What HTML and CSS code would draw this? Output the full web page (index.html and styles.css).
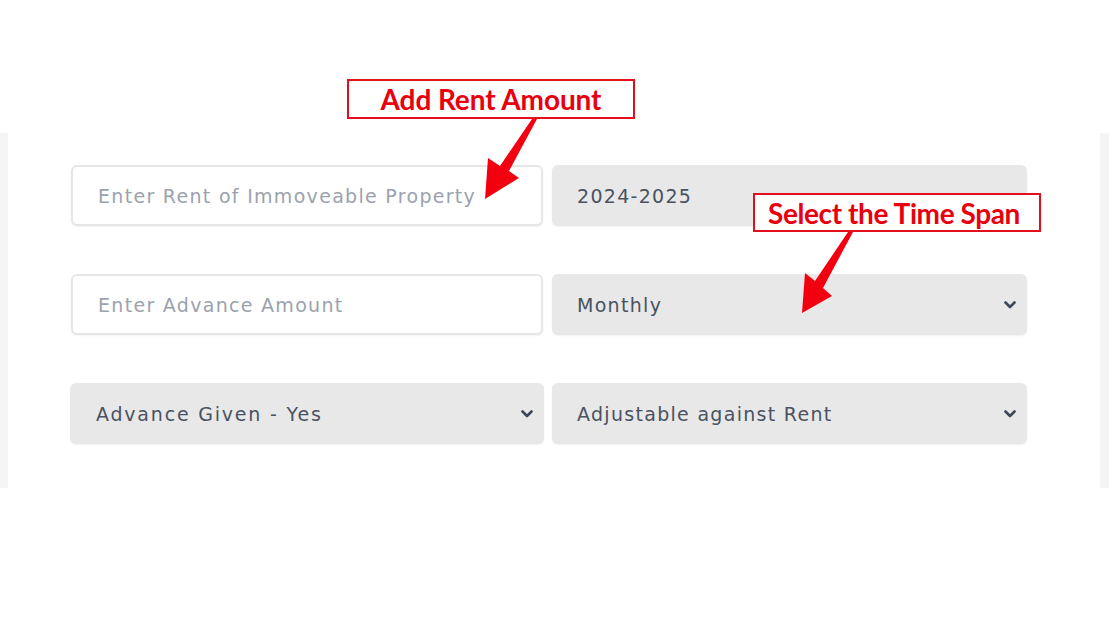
FILE: index.html
```html
<!DOCTYPE html>
<html lang="en">
<head>
<meta charset="utf-8">
<title>Rent Form</title>
<link rel="stylesheet" href="styles.css">
</head>
<body>
<div class="page">
  <div class="band">
    <div class="card">
      <div class="form-grid">
        <input class="field input" type="text" placeholder="Enter Rent of Immoveable Property">
        <div class="field select plain"><span>2024-2025</span></div>
        <input class="field input" type="text" placeholder="Enter Advance Amount">
        <div class="field select"><span>Monthly</span><svg class="chev" viewBox="0 0 12 8" width="12" height="8"><polyline points="1.5,1.5 6,6 10.5,1.5"/></svg></div>
        <div class="field select wide"><span>Advance Given - Yes</span><svg class="chev" viewBox="0 0 12 8" width="12" height="8"><polyline points="1.5,1.5 6,6 10.5,1.5"/></svg></div>
        <div class="field select"><span>Adjustable against Rent</span><svg class="chev" viewBox="0 0 12 8" width="12" height="8"><polyline points="1.5,1.5 6,6 10.5,1.5"/></svg></div>
      </div>
    </div>
  </div>

  <div class="note note-rent">Add Rent Amount</div>
  <div class="note note-span">Select the Time Span</div>
  <svg class="arrows" viewBox="0 0 1109 632" width="1109" height="632">
    <polygon points="532,119 537,119 509,171 519,178 485,199 488,158 500,166"/>
    <polygon points="848,232 853,232 823,288 832,296 802,313 805,273 815,281"/>
  </svg>
</div>
</body>
</html>
```

FILE: styles.css
```css
html, body {
  margin: 0;
  padding: 0;
  background: #ffffff;
}

.page {
  position: relative;
  width: 1109px;
  height: 632px;
  padding-top: 133px;
  box-sizing: border-box;
  font-family: "DejaVu Sans", "Open Sans", sans-serif;
}

.band {
  height: 355px;
  background: #f5f5f5;
  padding: 0 9px 0 8px;
}

.card {
  height: 100%;
  background: #ffffff;
  padding: 32px 0 0 63px;
  box-sizing: border-box;
}

.form-grid {
  display: grid;
  grid-template-columns: 472px 475px;
  grid-auto-rows: 61px;
  column-gap: 9px;
  row-gap: 48px;
}

.field {
  box-sizing: border-box;
  height: 61px;
  border-radius: 6px;
  font-family: "DejaVu Sans", "Open Sans", sans-serif;
  font-size: 19px;
  letter-spacing: 1.3px;
  margin: 0;
}

.input {
  border: 2px solid #e6e6e6;
  background: #ffffff;
  padding: 0 0 0 25px;
  color: #4a5261;
  outline: none;
  box-shadow: 0 1px 2px rgba(0, 0, 0, 0.05);
}

.input::placeholder {
  color: #9ba2ad;
}

.select {
  display: flex;
  align-items: center;
  justify-content: space-between;
  background: #e8e8e8;
  color: #4a5261;
  padding: 0 11px 0 25px;
  box-shadow: 0 1px 2px rgba(0, 0, 0, 0.06);
}

.select.wide {
  margin-left: -1px;
  margin-right: -1px;
  padding-left: 26px;
  padding-right: 11px;
  letter-spacing: 1.8px;
}

.chev {
  fill: none;
  stroke: #3b4656;
  stroke-width: 2.6;
  stroke-linecap: round;
  stroke-linejoin: round;
}

.note {
  position: absolute;
  box-sizing: border-box;
  width: 288px;
  height: 40px;
  border: 2px solid #e3101c;
  background: #ffffff;
  color: #e8000e;
  font-family: "Lato", "Open Sans", sans-serif;
  font-weight: 700;
  font-size: 28px;
  letter-spacing: -0.1px;
  display: flex;
  align-items: center;
  justify-content: center;
  line-height: 1;
}

.note-rent {
  left: 347px;
  top: 79px;
}

.note-span {
  left: 753px;
  top: 193px;
  height: 39px;
  letter-spacing: -0.4px;
  padding-right: 6px;
}

.arrows {
  position: absolute;
  left: 0;
  top: 0;
  pointer-events: none;
}

.arrows polygon {
  fill: #f20010;
}
```
